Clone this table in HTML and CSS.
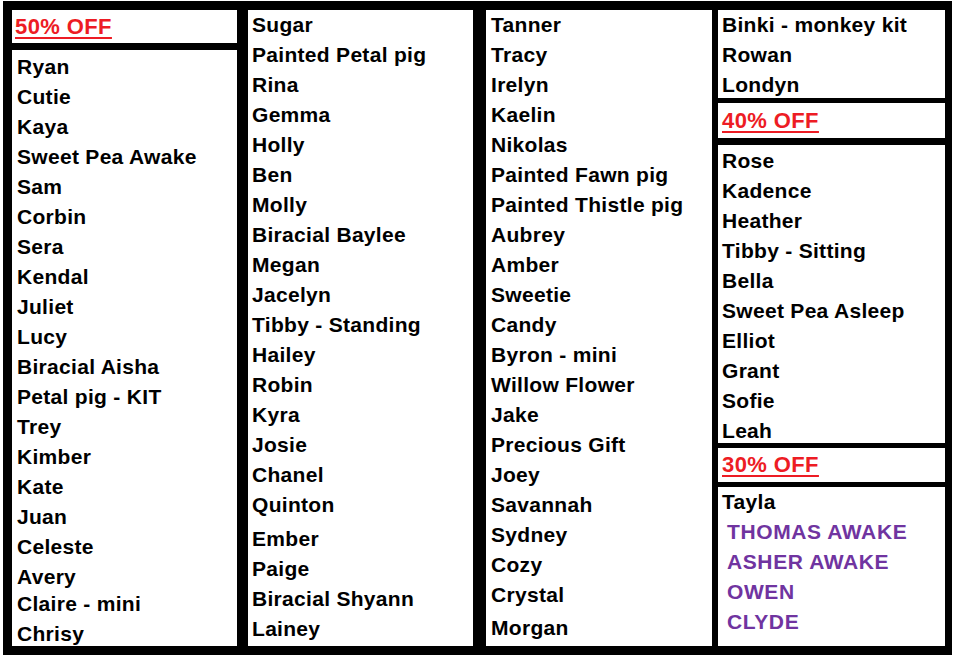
FILE: index.html
```html
<!DOCTYPE html>
<html>
<head>
<meta charset="utf-8">
<link rel="stylesheet" href="styles.css">
</head>
<body>
<div class="board">
  <div class="col col1">
    <div class="box head h50"><span class="off">50% OFF</span></div>
    <div class="box list fill pad2">
      <div class="item">Ryan</div>
      <div class="item">Cutie</div>
      <div class="item">Kaya</div>
      <div class="item">Sweet Pea Awake</div>
      <div class="item">Sam</div>
      <div class="item">Corbin</div>
      <div class="item">Sera</div>
      <div class="item">Kendal</div>
      <div class="item">Juliet</div>
      <div class="item">Lucy</div>
      <div class="item">Biracial Aisha</div>
      <div class="item">Petal pig - KIT</div>
      <div class="item">Trey</div>
      <div class="item">Kimber</div>
      <div class="item">Kate</div>
      <div class="item">Juan</div>
      <div class="item">Celeste</div>
      <div class="item">Avery</div>
      <div class="item up3">Claire - mini</div>
      <div class="item">Chrisy</div>
    </div>
  </div>
  <div class="col col2">
    <div class="box list fill">
      <div class="item">Sugar</div>
      <div class="item">Painted Petal pig</div>
      <div class="item">Rina</div>
      <div class="item">Gemma</div>
      <div class="item">Holly</div>
      <div class="item">Ben</div>
      <div class="item">Molly</div>
      <div class="item">Biracial Baylee</div>
      <div class="item">Megan</div>
      <div class="item">Jacelyn</div>
      <div class="item">Tibby - Standing</div>
      <div class="item">Hailey</div>
      <div class="item">Robin</div>
      <div class="item">Kyra</div>
      <div class="item">Josie</div>
      <div class="item">Chanel</div>
      <div class="item">Quinton</div>
      <div class="item down4">Ember</div>
      <div class="item">Paige</div>
      <div class="item">Biracial Shyann</div>
      <div class="item">Lainey</div>
    </div>
  </div>
  <div class="col col3">
    <div class="box list fill">
      <div class="item">Tanner</div>
      <div class="item">Tracy</div>
      <div class="item">Irelyn</div>
      <div class="item">Kaelin</div>
      <div class="item">Nikolas</div>
      <div class="item">Painted Fawn pig</div>
      <div class="item">Painted Thistle pig</div>
      <div class="item">Aubrey</div>
      <div class="item">Amber</div>
      <div class="item">Sweetie</div>
      <div class="item">Candy</div>
      <div class="item">Byron - mini</div>
      <div class="item">Willow Flower</div>
      <div class="item">Jake</div>
      <div class="item">Precious Gift</div>
      <div class="item">Joey</div>
      <div class="item">Savannah</div>
      <div class="item">Sydney</div>
      <div class="item">Cozy</div>
      <div class="item">Crystal</div>
      <div class="item down3">Morgan</div>
    </div>
  </div>
  <div class="col col4">
    <div class="box list top3">
      <div class="item">Binki - monkey kit</div>
      <div class="item">Rowan</div>
      <div class="item">Londyn</div>
    </div>
    <div class="box head h40"><span class="off">40% OFF</span></div>
    <div class="box list mid10">
      <div class="item">Rose</div>
      <div class="item">Kadence</div>
      <div class="item">Heather</div>
      <div class="item">Tibby - Sitting</div>
      <div class="item">Bella</div>
      <div class="item">Sweet Pea Asleep</div>
      <div class="item">Elliot</div>
      <div class="item">Grant</div>
      <div class="item">Sofie</div>
      <div class="item">Leah</div>
    </div>
    <div class="box head h30"><span class="off">30% OFF</span></div>
    <div class="box list fill">
      <div class="item">Tayla</div>
      <div class="item purple">THOMAS AWAKE</div>
      <div class="item purple">ASHER AWAKE</div>
      <div class="item purple">OWEN</div>
      <div class="item purple">CLYDE</div>
    </div>
  </div>
</div>
</body>
</html>
```
FILE: styles.css
```css
html, body {
  margin: 0;
  padding: 0;
  background: #ffffff;
}

body {
  font-family: "Liberation Sans", Arial, sans-serif;
  font-weight: 700;
  font-size: 21px;
  color: #000000;
}

.board {
  margin: 1px 0 0 3px;
  width: 949px;
  height: 654px;
  box-sizing: border-box;
  padding: 9px 7px 9px 9px;
  background: #000000;
  display: flex;
}

.col {
  display: flex;
  flex-direction: column;
  height: 100%;
}

.col1 { width: 225px; gap: 7px; }
.col2 { width: 225px; margin-left: 11px; }
.col3 { width: 226px; margin-left: 13px; }
.col4 { width: 227px; margin-left: 6px; }

.box {
  background: #ffffff;
  box-sizing: border-box;
  flex-shrink: 0;
}

.fill {
  flex: 1 1 0;
  min-height: 0;
}

.list {
  display: flex;
  flex-direction: column;
}

.pad2 { padding-top: 2px; }

.item {
  line-height: 30px;
  height: 30px;
  flex-shrink: 0;
  white-space: nowrap;
  letter-spacing: 0.3px;
}

.col1 .item { padding-left: 5px; }
.col2 .item { padding-left: 4px; }
.col3 .item { padding-left: 5px; }
.col4 .item { padding-left: 4px; }
.col4 .item.purple { padding-left: 9px; }

.up3 { margin-top: -3px; }
.down4 { margin-top: 4px; }
.down3 { margin-top: 3px; }

.head {
  display: flex;
  align-items: center;
}

.h50 { height: 33px; padding-left: 3px; }
.h40 { height: 35px; margin-top: 5px; padding-left: 4px; }
.h30 { height: 34px; margin-top: 5px; padding-left: 4px; }

.top3 { height: 88px; }
.mid10 { height: 298px; margin-top: 7px; padding-top: 1px; }
.col4 .fill { margin-top: 5px; }

.off {
  color: #ed1c24;
  font-size: 22px;
  letter-spacing: 0.4px;
  text-decoration: underline;
  text-decoration-thickness: 2px;
  text-underline-offset: 3px;
  line-height: 24px;
}

.purple {
  color: #7034a0;
  letter-spacing: 0.6px;
}
```
